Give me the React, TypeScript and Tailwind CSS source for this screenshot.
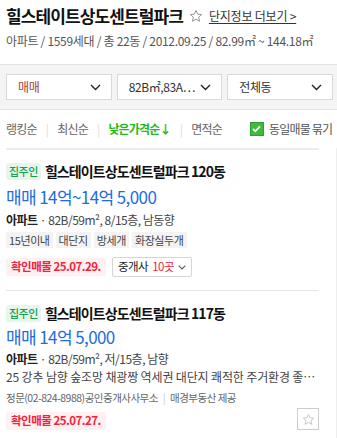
import React from 'react';

const font = "font-['Noto_Sans_CJK_KR',sans-serif]";

function Chevron({ className = '' }: { className?: string }) {
  return (
    <svg width="11" height="7" viewBox="0 0 11 7" className={className}>
      <path d="M1 1l4.5 4.5L10 1" fill="none" stroke="currentColor" strokeWidth="1.4" />
    </svg>
  );
}

function StarOutline({ size = 13, className = '' }: { size?: number; className?: string }) {
  return (
    <svg width={size} height={size} viewBox="0 0 24 24" className={className}>
      <path d="M12 2.5l2.9 6.3 6.8.7-5.1 4.6 1.5 6.8L12 17.4l-6.1 3.5 1.5-6.8L2.3 9.5l6.8-.7z" fill="none" stroke="currentColor" strokeWidth="1.5" strokeLinejoin="round" />
    </svg>
  );
}

function Select({ label, tone = 'text-[#333]' }: { label: string; tone?: string }) {
  return (
    <div className="flex-1 h-[26px] border border-[#d9d9d9] bg-white flex items-center justify-between pl-[11px] pr-[10px]">
      <span className={`text-[12px] tracking-[-0.4px] ${tone}`}>{label}</span>
      <Chevron className="text-[#222]" />
    </div>
  );
}

function Tag({ children }: { children: React.ReactNode }) {
  return <span className="h-[16px] leading-[16px] px-[3px] bg-[#f3f3f3] text-[11px] text-[#444] tracking-[-0.4px]">{children}</span>;
}

function Confirmed({ date }: { date: string }) {
  return (
    <span className="h-[18px] px-[5px] rounded-[3px] bg-[#fff0f1] text-[#f0243c] text-[11.5px] font-bold tracking-[-0.5px] flex items-center">
      확인매물 {date}
    </span>
  );
}

function ItemHead({ name }: { name: string }) {
  return (
    <div className="flex items-center gap-[4px]">
      <span className="h-[17px] px-[3px] rounded-[3px] bg-[#e7f6ec] text-[#17a04c] text-[11px] font-medium tracking-[-0.5px] flex items-center">집주인</span>
      <span className="text-[14px] font-bold text-[#111] tracking-[-0.9px]">{name}</span>
    </div>
  );
}

export default function App() {
  return (
    <div className={`w-[337px] h-[438px] overflow-hidden bg-white ${font}`}>
      {/* header */}
      <div className="px-[6px] pt-[4px]">
        <div className="flex items-center h-[24px]">
          <h1 className="text-[17px] font-bold text-[#111] tracking-[-0.9px]">힐스테이트상도센트럴파크</h1>
          <StarOutline size={14} className="ml-[6px] text-[#888]" />
          <span className="ml-[6px] text-[12px] text-[#333] underline underline-offset-2 tracking-[-0.2px]">단지정보 더보기 &gt;</span>
        </div>
        <div className="mt-[5px] text-[12px] text-[#555] tracking-[-0.3px] leading-[16px]">
          아파트 / 1559세대 / 총 22동 / 2012.09.25 / 82.99㎡ ~ 144.18㎡
        </div>
      </div>

      {/* filters */}
      <div className="mt-[15px] border-y border-[#e3e3e3] bg-[#f4f4f4] pt-[9px] pb-[9px] pl-[6px] pr-[4px] flex gap-[5px]">
        <Select label="매매" tone="text-[#a3402e]" />
        <Select label="82B㎡,83A…" />
        <Select label="전체동" />
      </div>

      {/* sort row */}
      <div className="h-[38px] flex items-center pl-[6px] text-[12px] tracking-[-0.8px] text-[#666] whitespace-nowrap">
        <span>랭킹순</span>
        <span className="mx-[9px] text-[#ddd]">|</span>
        <span>최신순</span>
        <span className="mx-[9px] text-[#ddd]">|</span>
        <span className="text-[#1db91d] font-bold">낮은가격순↓</span>
        <span className="mx-[9px] text-[#ddd]">|</span>
        <span>면적순</span>
        <span className="ml-[28px] flex items-center gap-[5px]">
          <span className="w-[14px] h-[14px] bg-[#3fba3f] border border-[#2f9f2f] flex items-center justify-center">
            <svg width="9" height="8" viewBox="0 0 9 8"><path d="M1 4l2.3 2.3L8 1.3" fill="none" stroke="#fff" strokeWidth="1.8" /></svg>
          </span>
          <span className="text-[#555]">동일매물 묶기</span>
        </span>
      </div>

      {/* list */}
      <div className="border-r border-[#eee]">
        <div className="ml-[6px] mr-[17px] border-t-2 border-[#ececec] pt-[11px] pb-[13px]">
          <ItemHead name="힐스테이트상도센트럴파크 120동" />
          <div className="mt-[4px] text-[17px] text-[#1f6ce0] tracking-[-0.6px] leading-[22px]">매매 14억~14억 5,000</div>
          <div className="mt-[3px] text-[12px] text-[#444] tracking-[-0.5px] leading-[18px]">
            <span className="font-bold text-[#222]">아파트</span> · 82B/59m², 8/15층, 남동향
          </div>
          <div className="mt-[3px] flex gap-[3px]">
            <Tag>15년이내</Tag>
            <Tag>대단지</Tag>
            <Tag>방세개</Tag>
            <Tag>화장실두개</Tag>
          </div>
          <div className="mt-[9px] flex items-center gap-[6px]">
            <Confirmed date="25.07.29." />
            <span className="h-[20px] px-[5px] border border-[#d5d5d5] rounded-[2px] flex items-center gap-[4px] text-[11.5px] text-[#222] tracking-[-0.5px]">
              중개사 <span className="text-[#f0243c]">10곳</span>
              <Chevron className="w-[8px] text-[#555]" />
            </span>
          </div>
        </div>

        <div className="ml-[6px] mr-[17px] border-t border-[#e6e6e6] pt-[12px] pb-[10px]">
          <ItemHead name="힐스테이트상도센트럴파크 117동" />
          <div className="mt-[2px] text-[17px] text-[#1f6ce0] tracking-[-0.6px] leading-[22px]">매매 14억 5,000</div>
          <div className="mt-[2px] text-[12px] text-[#444] tracking-[-0.5px] leading-[18px]">
            <span className="font-bold text-[#222]">아파트</span> · 82B/59m², 저/15층, 남향
          </div>
          <div className="text-[12px] text-[#444] tracking-[-0.15px] leading-[18px] whitespace-nowrap">
            25 강추 남향 숲조망 채광짱 역세권 대단지 쾌적한 주거환경 좋…
          </div>
          <div className="mt-[4px] text-[10.5px] text-[#666] tracking-[-0.5px] leading-[16px]">
            정문(02-824-8988)공인중개사사무소 <span className="mx-[3px] text-[#ccc]">|</span> 매경부동산 제공
          </div>
          <div className="mt-[2px] flex items-end justify-between">
            <Confirmed date="25.07.27." />
            <span className="w-[22px] h-[22px] border border-[#ccc] flex items-center justify-center">
              <StarOutline size={13} className="text-[#bbb]" />
            </span>
          </div>
        </div>
      </div>
    </div>
  );
}
